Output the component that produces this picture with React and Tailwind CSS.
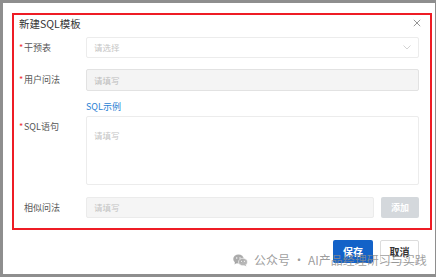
const font = { fontFamily: '"Noto Sans CJK SC", "Noto Sans", sans-serif' };

const Label = ({ children, required, top }) => (
  <div
    className={`w-[67px] shrink-0 flex text-[9px] text-[#555] ${top ? 'items-start pt-[5px]' : 'items-center'}`}
  >
    {required ? (
      <span className="text-[#e33] text-[9px] w-[5px] leading-[12px]">*</span>
    ) : (
      <span className="w-[5px]" />
    )}
    <span className="leading-[12px]">{children}</span>
  </div>
);

export default function App() {
  return (
    <div
      className="w-[436px] h-[277px] bg-[#8e8e8e] pt-[3px] pl-[3px] pr-[1px] pb-[3px] relative"
      style={font}
    >
      <div className="w-full h-full bg-white flex flex-col pl-[9px] pt-[10px] pr-[3px]">
        <div className="w-[420px] h-[217px] border-2 border-[#ee1c25] flex flex-col pl-[5px] pr-[11px]">
          <div className="h-[18px] flex items-center justify-between">
            <span className="text-[10.5px] text-[#333] leading-[18px]">新建SQL模板</span>
            <svg className="w-[8px] h-[8px] -mr-[2px] -mt-[2px]" viewBox="0 0 10 10" fill="none" stroke="#888" strokeWidth="1.1">
              <path d="M1 1l8 8M9 1l-8 8" />
            </svg>
          </div>

          <div className="mt-[4px] h-[21px] flex">
            <Label required>干预表</Label>
            <div className="flex-1 border border-[#ececec] rounded-[2px] flex items-center justify-between pl-[7px] pr-[7px]">
              <span className="text-[8.5px] text-[#c4c4c4]">请选择</span>
              <svg className="w-[8px] h-[5px]" viewBox="0 0 8 5" fill="none" stroke="#c8c8c8" strokeWidth="0.8">
                <path d="M0.5 0.5L4 4l3.5-3.5" />
              </svg>
            </div>
          </div>

          <div className="mt-[11px] h-[22px] flex">
            <Label required>用户问法</Label>
            <div className="flex-1 border border-[#e2e2e2] bg-[#f4f4f4] rounded-[2px] flex items-center pl-[7px]">
              <span className="text-[8.5px] text-[#bdbdbd]">请填写</span>
            </div>
          </div>

          <div className="mt-[10px] h-[12px] flex">
            <div className="w-[67px] shrink-0" />
            <span className="text-[9px] leading-[12px] text-[#2a7fd4]">SQL示例</span>
          </div>

          <div className="mt-[3px] h-[69px] flex">
            <Label required top>SQL语句</Label>
            <div className="flex-1 border border-[#ececec] rounded-[2px] pl-[7px] pt-[3px]">
              <span className="text-[8.5px] text-[#c4c4c4]">请填写</span>
            </div>
          </div>

          <div className="mt-[12px] h-[21px] flex">
            <Label>相似问法</Label>
            <div className="flex-1 border border-[#ebebeb] bg-[#f5f5f5] rounded-[2px] flex items-center pl-[7px]">
              <span className="text-[8.5px] text-[#c4c4c4]">请填写</span>
            </div>
            <div className="ml-[7px] w-[38px] bg-[#d4d8dc] rounded-[2px] flex items-center justify-center text-[9px] font-bold text-white">
              添加
            </div>
          </div>
        </div>

        <div className="mt-[10px] flex justify-end gap-[7px] pr-[13px]">
          <div className="w-[40px] h-[23px] bg-[#1362c8] rounded-[2px] flex items-center justify-center text-[10px] font-bold text-white">
            保存
          </div>
          <div className="w-[39px] h-[23px] bg-white border border-[#dcdcdc] rounded-[2px] flex items-center justify-center text-[10px] font-bold text-[#333]">
            取消
          </div>
        </div>
      </div>

      <div className="absolute left-[233px] top-[253px] flex items-center gap-[6px] text-[rgba(140,140,140,0.85)]">
        <svg className="w-[15px] h-[13px]" viewBox="0 0 30 26">
          <ellipse cx="11" cy="10" rx="10.5" ry="9" fill="rgba(150,150,150,0.8)" />
          <path d="M4 16 L3 21 L8 18Z" fill="rgba(150,150,150,0.8)" />
          <ellipse cx="20" cy="16" rx="9" ry="7.5" fill="rgba(175,175,175,0.9)" stroke="white" strokeWidth="1.2" />
          <path d="M25 21 L27 25 L22 22Z" fill="rgba(175,175,175,0.9)" />
          <circle cx="7.5" cy="8" r="1.4" fill="white" />
          <circle cx="14" cy="8" r="1.4" fill="white" />
          <circle cx="17" cy="14.5" r="1.1" fill="white" />
          <circle cx="23" cy="14.5" r="1.1" fill="white" />
        </svg>
        <span className="text-[12px] leading-[14px]">
          公众号<span className="mx-[3px]">·</span>AI产品经理研习与实践
        </span>
      </div>
    </div>
  );
}
